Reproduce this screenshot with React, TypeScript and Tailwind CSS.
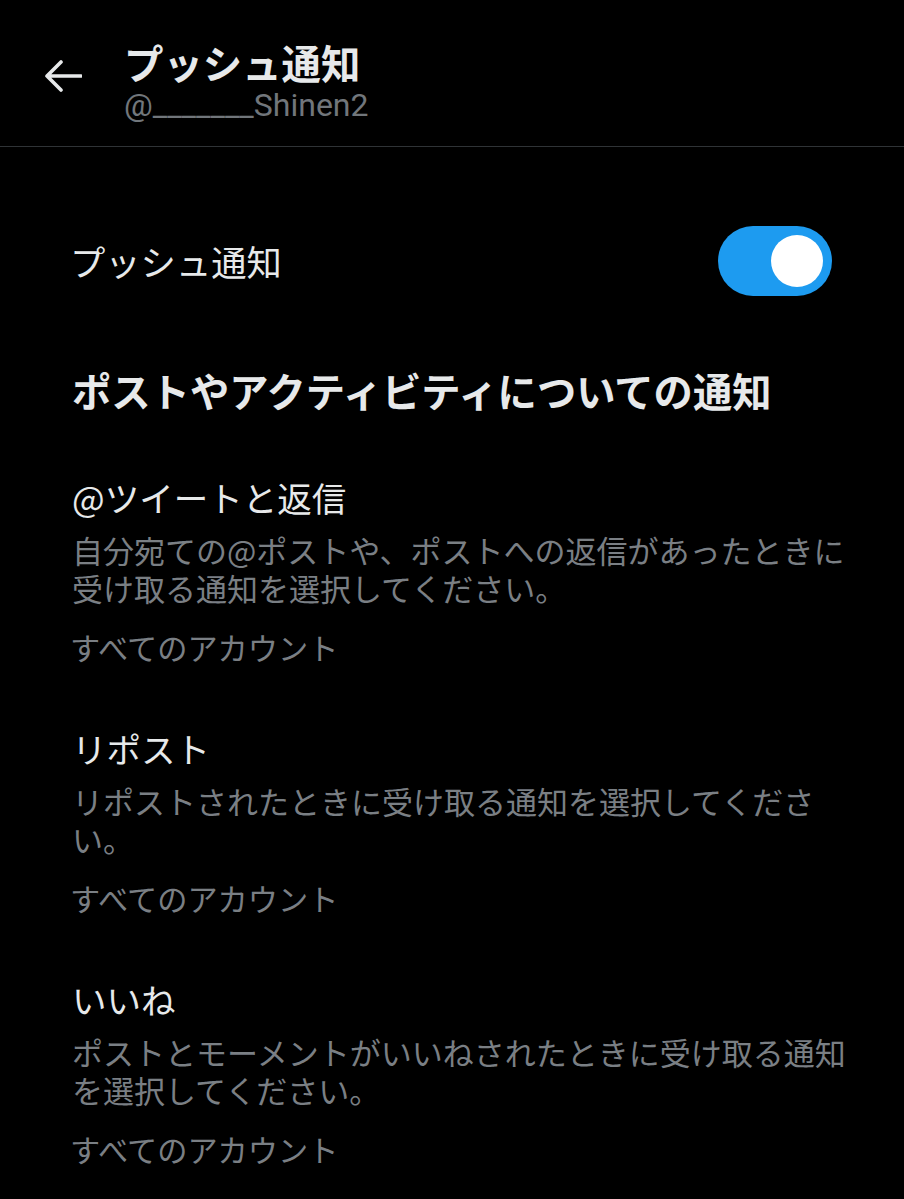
import React from "react";

const jp = "font-['Noto_Sans_CJK_JP','Noto_Sans',sans-serif]";

type Item = {
  title: string;
  lines: string[];
  value: string;
};

const items: Item[] = [
  {
    title: "@ツイートと返信",
    lines: ["自分宛ての@ポストや、ポストへの返信があったときに", "受け取る通知を選択してください。"],
    value: "すべてのアカウント",
  },
  {
    title: "リポスト",
    lines: ["リポストされたときに受け取る通知を選択してくださ", "い。"],
    value: "すべてのアカウント",
  },
  {
    title: "いいね",
    lines: ["ポストとモーメントがいいねされたときに受け取る通知", "を選択してください。"],
    value: "すべてのアカウント",
  },
];

function BackArrow() {
  return (
    <svg width="38" height="32" viewBox="0 0 38 32" fill="none" className="mt-[21px] shrink-0">
      <path
        d="M37 16H3M17 2L3 16L17 30"
        stroke="#e7e9ea"
        strokeWidth="3.6"
        strokeLinecap="round"
        strokeLinejoin="round"
      />
    </svg>
  );
}

function Toggle() {
  return (
    <div className="flex h-[70px] w-[114px] items-center justify-end rounded-full bg-[#1d9bf0] pr-[9px]">
      <div className="h-[52px] w-[52px] rounded-full bg-white" />
    </div>
  );
}

export default function App() {
  return (
    <div className={`min-h-[1199px] w-full bg-black text-[#e7e9ea] ${jp}`}>
      <header className="flex h-[147px] gap-[44px] border-b border-[#2f3336] pl-[44px] pt-[39px]">
        <BackArrow />
        <div className="-ml-[2px] flex flex-col">
          <h1 className="text-[39.4px] font-bold leading-[46px]">プッシュ通知</h1>
          <span className="font-['Roboto','Noto_Sans',sans-serif] text-[32px] leading-[40px] text-[#71767b]">
            @_______Shinen2
          </span>
        </div>
      </header>

      <main className="px-[72px]">
        <div className="mt-[79px] flex items-center justify-between">
          <span className="-ml-[2px] text-[35.3px] leading-[44px]">プッシュ通知</span>
          <Toggle />
        </div>

        <h2 className="mt-[71px] whitespace-nowrap text-[39.3px] font-bold leading-[46px]">
          ポストやアクティビティについての通知
        </h2>

        <div className="mt-[62px] flex flex-col gap-[59px]">
          {items.map((item) => (
            <section key={item.title} className="flex flex-col">
              <h3 className="text-[34.5px] leading-[44px]">{item.title}</h3>
              <p className="mt-[12px] text-[31px] leading-[38px] text-[#7a7f84]">
                {item.lines.map((line) => (
                  <span key={line} className="block whitespace-nowrap">
                    {line}
                  </span>
                ))}
              </p>
              <span className="-ml-[2px] mt-[20px] text-[30.2px] leading-[40px] text-[#7a7f84]">{item.value}</span>
            </section>
          ))}
        </div>
      </main>
    </div>
  );
}
